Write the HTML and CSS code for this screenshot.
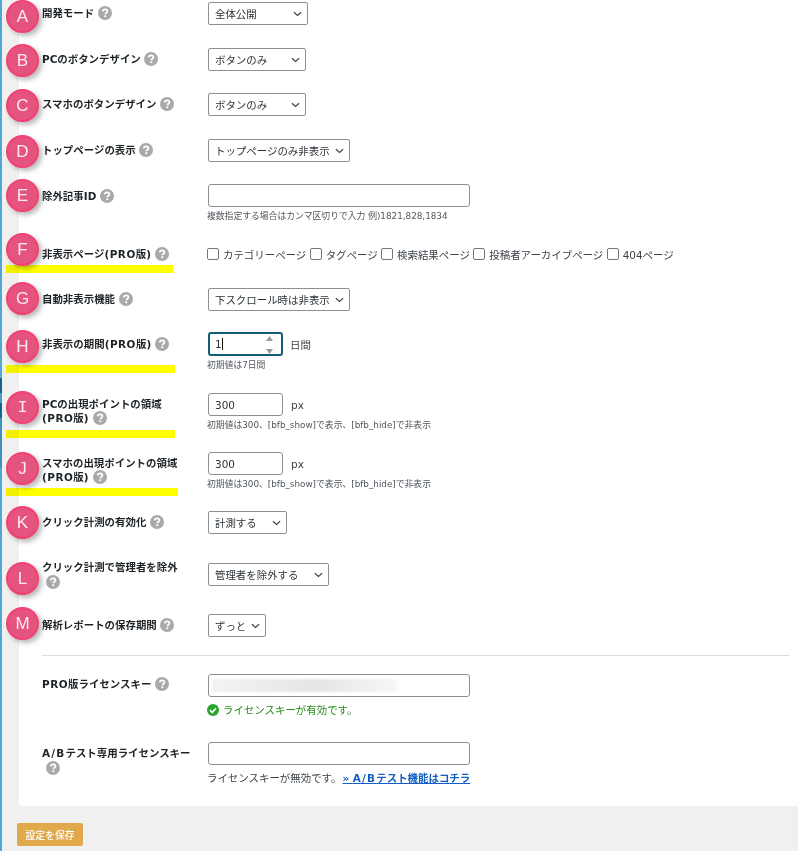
FILE: index.html
```html
<!DOCTYPE html>
<html lang="ja">
<head>
<meta charset="utf-8">
<title>設定</title>
<link rel="stylesheet" href="styles.css">
</head>
<body>
<svg class="defs" width="0" height="0" aria-hidden="true"><symbol id="q" viewBox="0 0 14 14"><circle cx="7" cy="7" r="7" fill="#a9a9a9"/><path d="M4.700 5.400c.1-1.400 1.100-2.100 2.400-2.100 1.400 0 2.300.8 2.300 1.900 0 1.600-1.900 1.500-2 3" fill="none" stroke="#fff" stroke-width="1.800"/><rect x="6.300" y="9.300" width="1.900" height="1.800" fill="#fff"/></symbol></svg>
<div class="page">
<main class="card">
  <div class="row row-a"><div class="label">開発モード <svg class="help"><use href="#q"/></svg></div><div class="field"><span class="select w-a">全体公開<svg class="chev" viewBox="0 0 10 6"><path d="M1 1l4 3.600L9 1"/></svg></span></div></div>
  <div class="row row-a"><div class="label">PCのボタンデザイン <svg class="help"><use href="#q"/></svg></div><div class="field"><span class="select w-b">ボタンのみ<svg class="chev" viewBox="0 0 10 6"><path d="M1 1l4 3.600L9 1"/></svg></span></div></div>
  <div class="row row-a"><div class="label">スマホのボタンデザイン <svg class="help"><use href="#q"/></svg></div><div class="field"><span class="select w-b">ボタンのみ<svg class="chev" viewBox="0 0 10 6"><path d="M1 1l4 3.600L9 1"/></svg></span></div></div>
  <div class="row row-a"><div class="label">トップページの表示 <svg class="help"><use href="#q"/></svg></div><div class="field"><span class="select w-d">トップページのみ非表示<svg class="chev" viewBox="0 0 10 6"><path d="M1 1l4 3.600L9 1"/></svg></span></div></div>
  <div class="row row-e"><div class="label">除外記事ID <svg class="help"><use href="#q"/></svg></div><div class="field"><span class="text-input"></span><p class="note">複数指定する場合はカンマ区切りで入力 例)1821,828,1834</p></div></div>
  <div class="row row-f"><div class="label">非表示ページ<span class="latin">(PRO</span>版<span class="latin">)</span> <svg class="help"><use href="#q"/></svg></div><div class="field checks"><span class="check"><i></i>カテゴリーページ</span><span class="check"><i></i>タグページ</span><span class="check"><i></i>検索結果ページ</span><span class="check"><i></i>投稿者アーカイブページ</span><span class="check"><i></i>404ページ</span></div></div>
  <div class="row row-g"><div class="label">自動非表示機能 <svg class="help"><use href="#q"/></svg></div><div class="field"><span class="select w-d">下スクロール時は非表示<svg class="chev" viewBox="0 0 10 6"><path d="M1 1l4 3.600L9 1"/></svg></span></div></div>
  <div class="row row-h"><div class="label">非表示の期間<span class="latin">(PRO</span>版<span class="latin">)</span> <svg class="help"><use href="#q"/></svg></div><div class="field"><div class="num-line"><span class="num focus"><b class="value">1</b><b class="caret"></b><svg class="spin" viewBox="0 0 8 20"><path d="M4 1l3.500 5h-7zM4 19l-3.500-5h7z"/></svg></span><span class="unit unit-day">日間</span></div><p class="note">初期値は7日間</p></div></div>
  <div class="row row-i"><div class="label">PCの出現ポイントの領域<br><span class="latin">(PRO</span>版<span class="latin">)</span> <svg class="help"><use href="#q"/></svg></div><div class="field"><div class="num-line"><span class="num"><b class="value">300</b></span><span class="unit">px</span></div><p class="note">初期値は300、[bfb_show]で表示、[bfb_hide]で非表示</p></div></div>
  <div class="row row-j"><div class="label">スマホの出現ポイントの領域<br><span class="latin">(PRO</span>版<span class="latin">)</span> <svg class="help"><use href="#q"/></svg></div><div class="field"><div class="num-line"><span class="num"><b class="value">300</b></span><span class="unit">px</span></div><p class="note">初期値は300、[bfb_show]で表示、[bfb_hide]で非表示</p></div></div>
  <div class="row row-k"><div class="label">クリック計測の有効化 <svg class="help"><use href="#q"/></svg></div><div class="field"><span class="select w-k">計測する<svg class="chev" viewBox="0 0 10 6"><path d="M1 1l4 3.600L9 1"/></svg></span></div></div>
  <div class="row row-l"><div class="label">クリック計測で管理者を除外<br><svg class="help help-first"><use href="#q"/></svg></div><div class="field"><span class="select w-l">管理者を除外する<svg class="chev" viewBox="0 0 10 6"><path d="M1 1l4 3.600L9 1"/></svg></span></div></div>
  <div class="row row-m"><div class="label">解析レポートの保存期間 <svg class="help"><use href="#q"/></svg></div><div class="field"><span class="select w-m">ずっと<svg class="chev" viewBox="0 0 10 6"><path d="M1 1l4 3.600L9 1"/></svg></span></div></div>
  <hr class="rule">
  <div class="row row-pro"><div class="label"><span class="latin">PRO</span>版ライセンスキー <svg class="help"><use href="#q"/></svg></div><div class="field"><span class="text-input"><span class="blur"></span></span><p class="valid"><svg class="ok" viewBox="0 0 12 12"><circle cx="6" cy="6" r="6"/><path d="M3 6.200l2.200 2.200L9 4.200"/></svg>ライセンスキーが有効です。</p></div></div>
  <div class="row row-ab"><div class="label"><span class="latin-wide">A/B</span>テスト専用ライセンスキー<br><svg class="help help-first"><use href="#q"/></svg></div><div class="field"><span class="text-input"></span><p class="invalid">ライセンスキーが無効です。<a href="#">» <span class="latin-wide">A/B</span>テスト機能はコチラ</a></p></div></div>
</main>
<div class="actions"><button class="save" type="button">設定を保存</button></div>
<span class="mark mark-f"></span><span class="mark mark-h"></span><span class="mark mark-i"></span><span class="mark mark-j"></span>
<span class="badge b-a">A</span><span class="badge b-b">B</span><span class="badge b-c">C</span><span class="badge b-d">D</span><span class="badge b-e">E</span><span class="badge b-f">F</span><span class="badge b-g">G</span><span class="badge b-h">H</span><span class="badge b-i">I</span><span class="badge b-j">J</span><span class="badge b-k">K</span><span class="badge b-l">L</span><span class="badge b-m">M</span>
</div>
</body>
</html>
```
FILE: styles.css
```css
* { box-sizing: border-box; }
html, body { margin: 0; padding: 0; }
body { height: 851px; overflow: hidden; background: #f0f0f1; font-family: "DejaVu Sans", "Noto Sans CJK JP", sans-serif; font-size: 10.45px; color: #3c434a; }
.defs { position: absolute; }
.page { position: relative; height: 851px; padding-left: 2px; overflow: hidden; background: linear-gradient(#4fa9d0, #4fa9d0) left top / 2px 100% no-repeat; }
.page::before { content: ""; position: absolute; left: 0; top: 378px; width: 2px; height: 90px; background: linear-gradient(#14658c 0 15px, #4a9dc4 15px 25px, #14658c 25px 40px, #4192ba 40px); }
.card { margin-left: 17px; height: 806px; padding: 2px 9px 0 23px; background: #fff; border-bottom-left-radius: 4px; }
.row { display: grid; grid-template-columns: 166px 1fr; }
.label { font-weight: 700; color: #1d2327; line-height: 14px; }
.latin { letter-spacing: .5px; }
.latin-wide { letter-spacing: 1.200px; }
.field { min-width: 0; }
.row-a { height: 45.500px; }
.row-a .label, .row-k .label, .row-m .label, .row-g .label { padding-top: 4px; }
.row-e { height: 61px; }
.row-e .label { padding-top: 5px; }
.row-f { height: 43px; padding-top: 1px; }
.row-f .label { padding-top: 1px; }
.row-g { height: 44px; }
.row-h { height: 61px; }
.row-h .label { padding-top: 5px; }
.row-i { height: 59px; }
.row-i .label, .row-j .label { padding-top: 4px; }
.row-j { height: 59px; }
.row-k { height: 52px; }
.row-l { height: 51px; }
.row-l .label { margin-top: -3px; }
.row-m { height: 41px; }
.rule { margin: 0 0 18px; border: 0; border-top: 1px solid #dcdcde; }
.row-pro { height: 68px; }
.row-pro .label { padding-top: 3px; }
.row-ab .label { padding-top: 4px; }
.help { width: 14px; height: 14px; vertical-align: -3px; }
.help-first { margin-left: 4px; margin-top: 1px; }
.select { position: relative; display: inline-flex; align-items: center; height: 23px; padding-left: 6px; background: #fff; border: 1px solid #8c8f94; border-radius: 2px; color: #2c3338; white-space: nowrap; }
.w-a { width: 100px; }
.w-b { width: 98px; }
.w-d { width: 142px; }
.w-k { width: 79px; }
.w-l { width: 121px; }
.w-m { width: 58px; }
.chev { position: absolute; right: 5px; top: 8px; width: 9px; height: 6px; fill: none; stroke: #3c434a; stroke-width: 1.300; }
.text-input { display: block; position: relative; width: 262px; height: 23px; border: 1px solid #8c8f94; border-radius: 3px; background: #fff; }
.blur { position: absolute; left: 3px; top: 4px; width: 190px; height: 13px; background: linear-gradient(90deg, #f2f3f3, #e4e5e5 55%, #f4f5f5 95%, #fff); filter: blur(1px); }
.note { margin: 3px 0 0 -1px; font-size: 8.800px; line-height: 12px; color: #50575e; white-space: nowrap; }
.checks { display: flex; align-items: center; height: 16px; margin-left: -1px; }
.check { display: inline-flex; align-items: center; margin-right: 3.400px; color: #3c434a; white-space: nowrap; }
.check i { width: 12px; height: 12px; margin: 0 4px 0 0; border: 1px solid #72777c; border-radius: 2px; background: #fff; }
.num-line { display: flex; align-items: center; }
.num { position: relative; display: inline-flex; align-items: center; width: 75px; height: 23px; padding-left: 6px; border: 1px solid #8c8f94; border-radius: 3px; background: #fff; }
.focus { height: 24px; border: 2px solid #135e74; padding-left: 5px; }
.value { font-weight: 400; color: #2c3338; }
.caret { width: 1px; height: 12px; background: #111; }
.spin { position: absolute; right: 7px; top: 1px; width: 9px; height: 20px; fill: #9a9a9a; }
.unit { margin-left: 8px; color: #3c434a; }
.unit-day { margin-left: 7px; }
.valid { margin: 6px 0 0 -1px; display: flex; align-items: center; color: #2b8a1f; line-height: 14px; }
.ok { width: 12px; height: 12px; margin-right: 4px; }
.ok circle { fill: #2aa52a; }
.ok path { fill: none; stroke: #fff; stroke-width: 1.700; }
.invalid { margin: 6px 0 0 -1px; line-height: 14px; white-space: nowrap; }
.invalid a { margin-left: 1px; color: #135ec4; font-weight: 700; }
.actions { padding: 17px 0 0 15px; }
.save { width: 66px; height: 23px; padding: 0; border: 0; border-radius: 2px; background: #e0a94c; color: #fff; font-family: "Noto Sans CJK JP", sans-serif; font-size: 9.800px; font-weight: 500; }
.mark { position: absolute; left: 6px; height: 8px; background: #ffff00; mix-blend-mode: multiply; }
.mark-f { top: 265px; width: 167px; }
.mark-h { top: 365px; width: 169px; }
.mark-i { top: 430px; width: 169px; }
.mark-j { top: 488px; width: 172px; }
.badge { position: absolute; left: 6px; display: flex; align-items: center; justify-content: center; width: 33px; height: 33px; border: 2px solid #f43f72; border-radius: 50%; background: #e5547f; color: #ffe9ef; font-family: "Liberation Sans", sans-serif; font-size: 17px; box-shadow: 3px 3px 5px rgba(0,0,0,.28); }
.b-a { top: 0; } .b-b { top: 44px; } .b-c { top: 89px; } .b-d { top: 135px; } .b-e { top: 179px; }
.b-f { top: 233px; } .b-g { top: 282px; } .b-h { top: 330px; } .b-i { top: 391px; font-family: "Liberation Mono", monospace; } .b-j { top: 452px; }
.b-k { top: 506px; } .b-l { top: 562px; } .b-m { top: 607px; }
```
